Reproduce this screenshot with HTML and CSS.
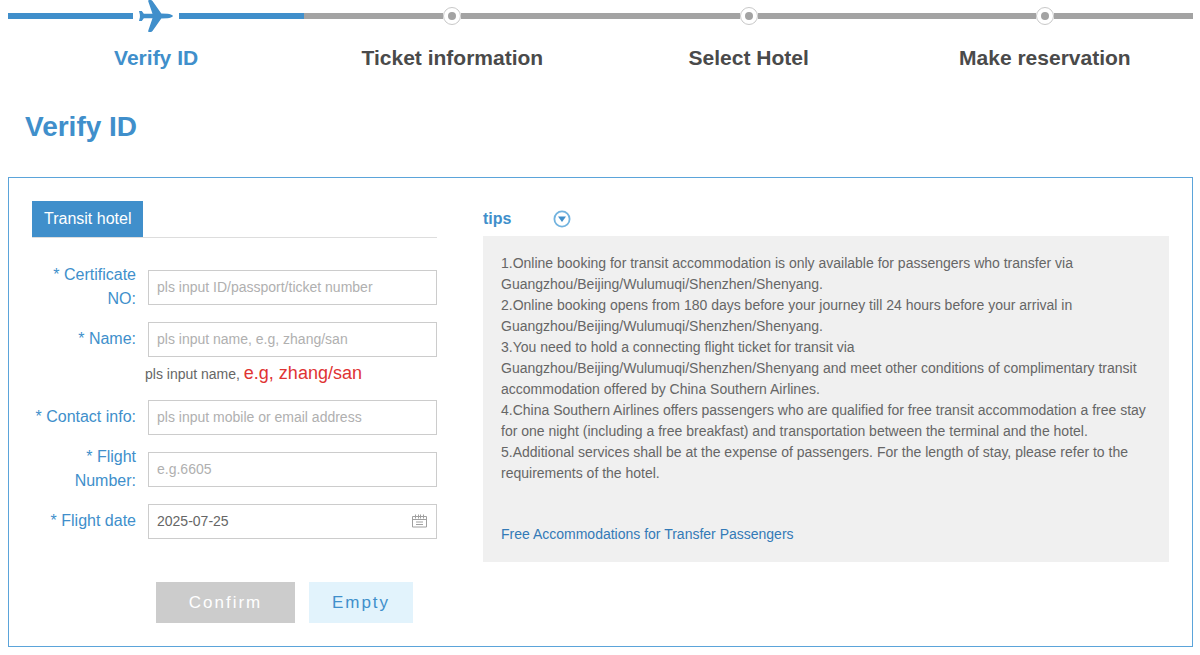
FILE: index.html
```html
<!DOCTYPE html>
<html lang="en">
<head>
	<meta charset="utf-8">
	<meta name="viewport" content="width=device-width, initial-scale=1">
	<title>Verify ID</title>
	<link rel="stylesheet" href="styles.css">
</head>
<body>
	<!-- progress steps -->
	<ol class="steps">
		<li class="step step-active">
			<div class="step-track">
				<span class="step-plane">
					<svg width="36" height="32" viewBox="0 0 36 32" aria-hidden="true">
						<path fill="#408fcb" d="M1 11h2.800l2 2.800L14.500 13.800 10.300 1.600C10 .6 10.400 0 11.200 0h1.500c.8 0 1.300.3 1.800 1L23.300 13.400l6.200.3c2.500.2 4.600 1.200 5.700 2.300-1.100 1.100-3.200 2.100-5.700 2.300l-6.200.3L14.500 31c-.5.700-1 1-1.800 1h-1.500c-.8 0-1.200-.6-.9-1.600L14.500 18.200 5.800 18.200l-2 2.800H1l.9-3.800v-2.400z"/>
					</svg>
				</span>
			</div>
			<span class="step-name">Verify ID</span>
		</li>
		<li class="step">
			<div class="step-track"><span class="step-dot"></span></div>
			<span class="step-name">Ticket information</span>
		</li>
		<li class="step">
			<div class="step-track"><span class="step-dot"></span></div>
			<span class="step-name">Select Hotel</span>
		</li>
		<li class="step">
			<div class="step-track"><span class="step-dot"></span></div>
			<span class="step-name">Make reservation</span>
		</li>
	</ol>

	<h1 class="page-title">Verify ID</h1>

	<div class="panel">
		<!-- left: form -->
		<form class="verify-form">
			<div class="tabs">
				<a href="#" class="tab">Transit hotel</a>
			</div>
			<div class="form-row">
				<label class="form-label" for="certificate">* Certificate NO:</label>
				<input class="form-input" id="certificate" type="text" placeholder="pls input ID/passport/ticket number">
			</div>
			<div class="form-row">
				<label class="form-label" for="name">* Name:</label>
				<input class="form-input" id="name" type="text" placeholder="pls input name, e.g, zhang/san">
			</div>
			<p class="form-hint">pls input name, <span class="hint-red">e.g, zhang/san</span></p>
			<div class="form-row">
				<label class="form-label" for="contact">* Contact info:</label>
				<input class="form-input" id="contact" type="text" placeholder="pls input mobile or email address">
			</div>
			<div class="form-row">
				<label class="form-label" for="flight">* Flight Number:</label>
				<input class="form-input" id="flight" type="text" placeholder="e.g.6605">
			</div>
			<div class="form-row">
				<label class="form-label" for="date">* Flight date</label>
				<div class="date-box">
					<input class="form-input" id="date" type="text" value="2025-07-25">
					<svg class="date-icon" width="15" height="14" viewBox="0 0 15 14" aria-hidden="true">
						<g fill="none" stroke="#a0a0a0">
							<path d="M.5 2.500h14v10.500H.5zM.5 5.500h14M3.500 .5v4M6.500 .5v4M8.500 .5v4M11.500 .5v4M4 8h7M4 10.500h7"/>
						</g>
					</svg>
				</div>
			</div>
			<div class="form-buttons">
				<button type="submit" class="btn btn-confirm">Confirm</button>
				<button type="reset" class="btn btn-empty">Empty</button>
			</div>
		</form>

		<!-- right: tips -->
		<div class="tips">
			<div class="tips-head">
				<h2 class="tips-title">tips</h2>
				<button type="button" class="tips-toggle" aria-label="tips">
					<svg width="18" height="18" viewBox="0 0 18 18" aria-hidden="true">
						<circle cx="9" cy="9" r="7.600" fill="none" stroke="#72b3df" stroke-width="1.800"/>
						<path fill="#408fcb" d="M5 6.500h8l-4 5.500z"/>
					</svg>
				</button>
			</div>
			<div class="tips-body">
				<p>1.Online booking for transit accommodation is only available for passengers who transfer via Guangzhou/Beijing/Wulumuqi/Shenzhen/Shenyang.</p>
				<p>2.Online booking opens from 180 days before your journey till 24 hours before your arrival in Guangzhou/Beijing/Wulumuqi/Shenzhen/Shenyang.</p>
				<p>3.You need to hold a connecting flight ticket for transit via Guangzhou/Beijing/Wulumuqi/Shenzhen/Shenyang and meet other conditions of complimentary transit accommodation offered by China Southern Airlines.</p>
				<p>4.China Southern Airlines offers passengers who are qualified for free transit accommodation a free stay for one night (including a free breakfast) and transportation between the terminal and the hotel.</p>
				<p>5.Additional services shall be at the expense of passengers. For the length of stay, please refer to the requirements of the hotel.</p>
				<a href="#" class="tips-link">Free Accommodations for Transfer Passengers</a>
			</div>
		</div>
	</div>
</body>
</html>
```
FILE: styles.css
```css
* {
	box-sizing: border-box;
}
body {
	margin: 0 7px 8px 8px;
	font-family: Arial, "Liberation Sans", Helvetica, sans-serif;
	font-size: 14px;
	color: #666;
	background-color: #fff;
}
p, h1, h2, ol {
	margin: 0;
	padding: 0;
}
a {
	text-decoration: none;
}
button, input {
	font-family: inherit;
}

/* steps */
.steps {
	display: flex;
	list-style: none;
}
.step {
	flex: 1;
	text-align: center;
}
.step-track {
	display: flex;
	align-items: center;
	height: 32px;
	margin-bottom: 14px;
}
/* the bar on both sides of the marker */
.step-track::before,
.step-track::after {
	content: "";
	flex: 1;
	height: 6px;
	background-color: #a3a3a3;
}
.step-active .step-track::before,
.step-active .step-track::after {
	background-color: #408fcb;
}
.step-plane {
	width: 46px;
	height: 32px;
}
.step-dot {
	display: flex;
	align-items: center;
	justify-content: center;
	width: 18px;
	height: 18px;
	border: 1px solid #c8c8c8;
	border-radius: 50%;
	background-color: #fff;
}
.step-dot::before {
	content: "";
	width: 8px;
	height: 8px;
	border-radius: 50%;
	background-color: #a3a3a3;
}
.step-name {
	display: block;
	line-height: 24px;
	font-size: 21px;
	font-weight: bold;
	color: #4a4a4a;
}
.step-active .step-name {
	color: #408fcb;
}

.page-title {
	margin: 41px 0 34px 17px;
	line-height: 32px;
	font-size: 28px;
	color: #408fcb;
}

/* main box */
.panel {
	display: grid;
	grid-template-columns: 405px 1fr;
	gap: 46px;
	padding: 23px;
	border: 1px solid #5ba4da;
}

/* form */
.tabs {
	display: flex;
	margin-bottom: 23px;
	border-bottom: 1px solid #ddd;
}
.tab {
	padding: 0 12px;
	line-height: 36px;
	font-size: 16px;
	color: #fff;
	background-color: #408fcb;
}
.form-row {
	display: grid;
	grid-template-columns: 104px 1fr;
	gap: 12px;
	align-items: center;
	height: 52px;
}
.form-label {
	line-height: 24px;
	font-size: 16px;
	text-align: right;
	color: #408fcb;
}
.form-input {
	display: block;
	width: 100%;
	height: 35px;
	padding: 0 8px;
	border: 1px solid #ccc;
	font-size: 14px;
	color: #666;
	background-color: #fff;
}
.form-input::placeholder {
	color: #b0b0b0;
}
.form-hint {
	padding: 0 0 9px 113px;
	line-height: 16px;
	font-size: 14px;
}
.hint-red {
	font-size: 18px;
	color: #e03333;
}
.date-box {
	position: relative;
}
.date-icon {
	position: absolute;
	right: 10px;
	top: 10px;
}
.form-buttons {
	display: flex;
	gap: 14px;
	margin-top: 35px;
	padding-left: 124px;
}
.btn {
	height: 41px;
	padding: 0;
	border: none;
	font-size: 17px;
	letter-spacing: 2px;
	cursor: pointer;
}
.btn-confirm {
	width: 139px;
	color: #fff;
	background-color: #ccc;
}
.btn-empty {
	width: 104px;
	color: #408fcb;
	background-color: #e2f3fc;
}

/* tips */
.tips-head {
	display: flex;
	align-items: center;
	gap: 42px;
	height: 35px;
}
.tips-title {
	font-size: 16px;
	color: #408fcb;
}
.tips-toggle {
	display: flex;
	padding: 0;
	border: none;
	background: none;
	cursor: pointer;
}
.tips-body {
	padding: 17px 18px;
	line-height: 21px;
	background-color: #f0f0f0;
}
.tips-link {
	display: block;
	margin-top: 40px;
	color: #337ab7;
}
```
